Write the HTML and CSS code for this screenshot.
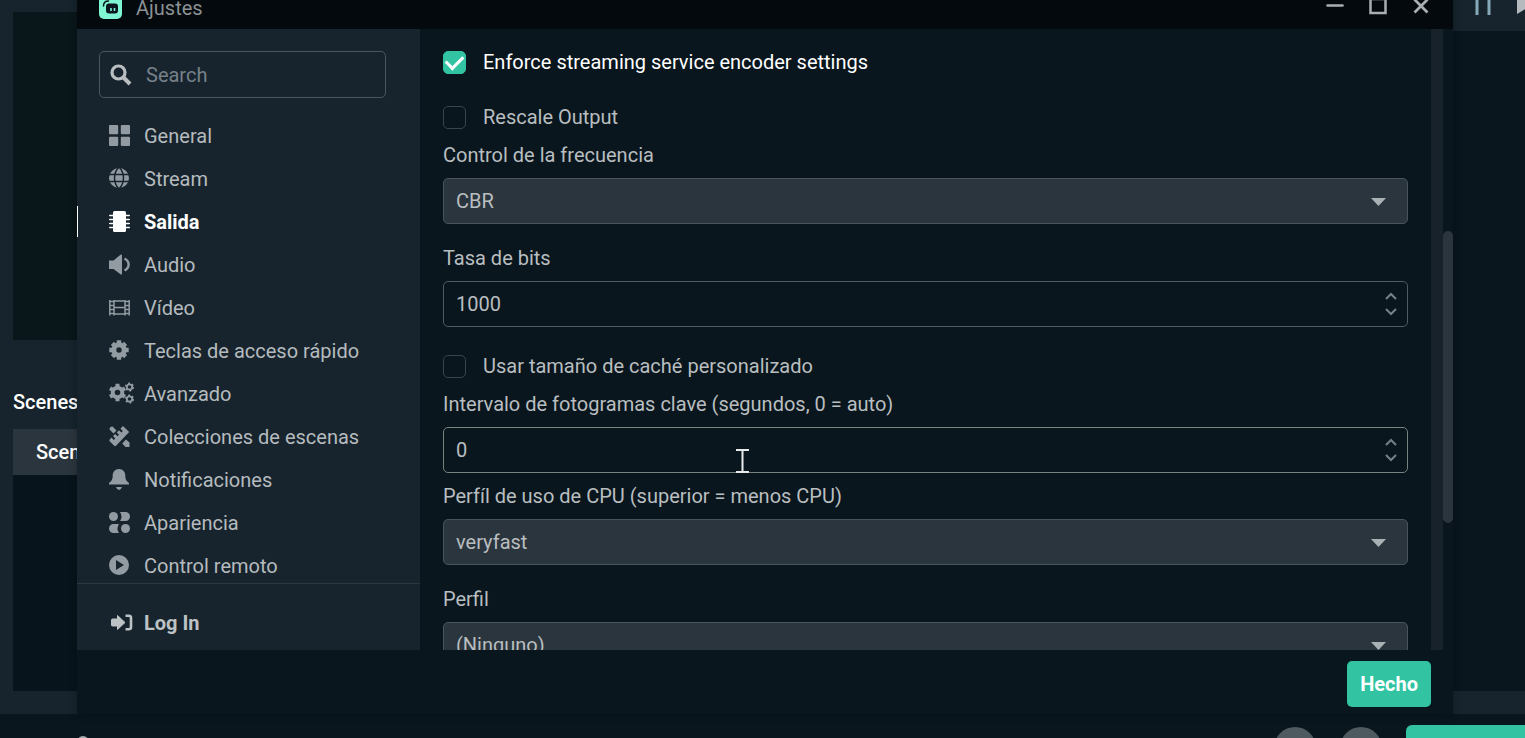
FILE: index.html
```
<!DOCTYPE html>
<html lang="es">
<head>
  <meta charset="UTF-8">
  <title>Ajustes</title>
  <link rel="stylesheet" href="styles.css">
</head>
<body>
  <div class="app">
    <div class="studio">
      <main class="studio-main">
        <div class="preview"></div>
        <h2 class="scenes-title">Scenes</h2>
        <div class="scenes-list">
          <div class="scene">Scene</div>
        </div>
      </main>
      <aside class="side-panel">
        <div class="side-header">
          <svg width="56" height="16" viewBox="0 0 56 16">
            <path d="M4 0v15M16 0v15" stroke="#86a9ba" stroke-width="3"/>
            <path d="M44 0v14l12-7V0z" fill="#b4babd"/>
          </svg>
        </div>
        <div class="side-body"></div>
      </aside>
    </div>
    <footer class="app-footer">
      <svg class="status-icon" width="12" height="12" viewBox="0 0 12 12"><circle cx="6" cy="6" r="5" fill="none" stroke="#a5adb1" stroke-width="2"/></svg>
      <button class="round-button" aria-label="Editor"></button>
      <button class="round-button" aria-label="Replay"></button>
      <button class="live-button" aria-label="Go Live"></button>
    </footer>
  </div>

  <div class="modal" role="dialog" aria-label="Ajustes">
    <header class="titlebar">
      <svg class="logo" width="23" height="23" viewBox="0 0 23 23">
        <rect width="23" height="23" rx="5" fill="#80f5d2"/>
        <path d="M4.500 10c0-3.500 1.500-5 5-5" fill="none" stroke="#09161d" stroke-width="1.500" stroke-linecap="round"/>
        <rect x="7" y="7.500" width="12" height="10" rx="3" fill="#09161d"/>
        <path d="M12 12v3M15.500 12v3" stroke="#80f5d2" stroke-width="1.600"/>
      </svg>
      <span class="titlebar-text">Ajustes</span>
      <div class="window-buttons">
        <button aria-label="Minimizar"><svg width="20" height="20" viewBox="0 0 20 20"><path d="M2.500 7.500h15" stroke-width="2.500" stroke-linecap="round"/></svg></button>
        <button aria-label="Maximizar"><svg width="20" height="20" viewBox="0 0 20 20"><path d="M2.500 1h15v14h-15z" stroke-width="2.500"/></svg></button>
        <button aria-label="Cerrar"><svg width="20" height="20" viewBox="0 0 20 20"><path d="M3.500 1.500l13 13M16.500 1.500l-13 13" stroke-width="2.800"/></svg></button>
      </div>
    </header>

    <div class="modal-body">
      <div class="sidebar">
        <label class="search">
          <svg width="22" height="22" viewBox="0 0 22 22"><circle cx="8.500" cy="8.500" r="6.500" fill="none" stroke="currentColor" stroke-width="3.200"/><path d="M13.500 13.500l6.500 6.500" stroke="currentColor" stroke-width="4"/></svg>
          <input type="text" placeholder="Search" aria-label="Search">
        </label>
        <nav class="menu">
          <a href="#" class="menu-item">
            <svg viewBox="0 0 21 21"><rect width="9.200" height="9.200" rx="1"/><rect x="11.800" width="9.200" height="9.200" rx="1"/><rect y="11.800" width="9.200" height="9.200" rx="1"/><rect x="11.800" y="11.800" width="9.200" height="9.200" rx="1"/></svg>
            General
          </a>
          <a href="#" class="menu-item">
            <svg viewBox="0 0 21 21"><circle cx="10" cy="10" r="10"/><path class="cut" d="M0 6.500h20M0 13.500h20M10-1C4 5 4 15 10 21M10-1C16 5 16 15 10 21"/></svg>
            Stream
          </a>
          <a href="#" class="menu-item active">
            <svg viewBox="0 0 21 21"><rect x="4" width="13" height="21" rx="1.500"/><path class="line" stroke-width="1.600" stroke-linecap="round" d="M.800 4.500H4M.800 8.500H4M.800 12.500H4M.800 16.500H4M17 4.500h3.200M17 8.500h3.200M17 12.500h3.200M17 16.500h3.200"/></svg>
            Salida
          </a>
          <a href="#" class="menu-item">
            <svg viewBox="0 0 21 21"><path d="M0 6.500h4.500L11.500.800q1.500-1 1.500 1v17.500q0 2-1.500 1L4.500 15H0z"/><path class="line" stroke-width="2.400" d="M15.500 4.500c5.500 3 5.500 9 0 12"/></svg>
            Audio
          </a>
          <a href="#" class="menu-item">
            <svg viewBox="0 0 21 21"><path class="line" stroke-width="1.500" d="M.800 3v15.500M20.200 3v15.500M5 3v15.500M16 3v15.500M5 4h11M5 10.500h11M5 17h11M1 4.500h4M1 8.500h4M1 12.500h4M1 16.500h4M16 4.500h4M16 8.500h4M16 12.500h4M16 16.500h4"/></svg>
            Vídeo
          </a>
          <a href="#" class="menu-item">
            <svg viewBox="0 0 21 21"><circle class="line" cx="10" cy="10" r="5.200" stroke-width="5"/><path class="line" stroke-width="4.400" d="M10 3V.300M10 17v2.700M3 10H.300M17 10h2.700M5 5L3.400 3.400M15 5l1.600-1.600M5 15l-1.600 1.600M15 15l1.600 1.600"/></svg>
            Teclas de acceso rápido
          </a>
          <a href="#" class="menu-item">
            <svg viewBox="0 0 21 21">
              <circle class="line" cx="8.500" cy="9.500" r="4.800" stroke-width="4"/>
              <path class="line" stroke-width="4" d="M8.500 3.800V.800M8.500 15.200v3M3.600 6.700L1 5.200M13.400 6.700L16 5.200M3.600 12.300L1 13.800M13.400 12.300L16 13.800"/>
              <circle class="line" cx="20.500" cy="4" r="2.700" stroke-width="1.800"/><circle class="line" cx="20.500" cy="16" r="2.700" stroke-width="1.800"/>
              <circle class="line" cx="20.500" cy="4" r="3.800" stroke-width="1.500" stroke-dasharray="2 2"/><circle class="line" cx="20.500" cy="16" r="3.800" stroke-width="1.500" stroke-dasharray="2 2"/>
            </svg>
            Avanzado
          </a>
          <a href="#" class="menu-item">
            <svg viewBox="0 0 21 21"><path d="M14.500.600l5.700 5.500L7 19.800q-.9.900-1.800 0L.700 15.300q-.9-.9 0-1.800l1.800-1.900 2.300 2.300 1.500-1.500L4 10.100l2.200-2.200 2.300 2.300L10 8.700 7.700 6.400 10 4.200l2.300 2.300L13.800 5 11.500 2.700l1.600-2q.7-.7 1.400-.1z"/><path d="M3.500.500l4 4-3 3-4-4q0-3 3-3zM17 13.500l3.500 3v4.500h-4l-3.300-3.500z"/></svg>
            Colecciones de escenas
          </a>
          <a href="#" class="menu-item">
            <svg viewBox="0 0 21 21"><path d="M10 0c4 0 6.300 3 6.300 6.500 0 4 1 5.500 3.700 7.500v1.500H0V14c2.700-2 3.700-3.500 3.700-7.500C3.700 3 6 0 10 0zM7 18h6q-1 3-3 3t-3-3z"/></svg>
            Notificaciones
          </a>
          <a href="#" class="menu-item">
            <svg viewBox="0 0 21 21"><circle cx="4.500" cy="4.500" r="4.500"/><path d="M11 0h5.500a4.500 4.500 0 0 1 0 9H11q3-4.500 0-9zM10 12H4.500a4.500 4.500 0 0 0 0 9H10q-3-4.500 0-9z"/><circle cx="16.500" cy="16.500" r="4.500"/></svg>
            Apariencia
          </a>
          <a href="#" class="menu-item">
            <svg viewBox="0 0 21 21"><path fill-rule="evenodd" d="M10 0a10 10 0 1 0 0 20 10 10 0 0 0 0-20zM7 5l8 5-8 5z"/></svg>
            Control remoto
          </a>
        </nav>
        <div class="login">
          <a href="#" class="menu-item">
            <svg viewBox="0 0 21 21"><path d="M3.500 7h5V3.500L16 10.500 8.500 17.500V14h-5q-1 0-1-1V8q0-1 1-1z" stroke="currentColor" stroke-linejoin="round"/><path class="line" stroke-width="2.600" d="M16.500 3.800h3.200q2.300 0 2.300 2v9.400q0 2-2.300 2h-3.200"/></svg>
            Log In
          </a>
        </div>
      </div>

      <form class="settings">
        <label class="check">
          <input type="checkbox" checked>
          <span>Enforce streaming service encoder settings</span>
        </label>
        <label class="check">
          <input type="checkbox">
          <span>Rescale Output</span>
        </label>
        <div class="field">
          <label for="rate-control">Control de la frecuencia</label>
          <div class="control">
            <select id="rate-control"><option>CBR</option></select>
            <svg class="caret" width="15" height="8" viewBox="0 0 15 8"><path d="M0 0h15L7.500 8z"/></svg>
          </div>
        </div>
        <div class="field">
          <label for="bitrate">Tasa de bits</label>
          <div class="control">
            <input type="number" id="bitrate" value="1000">
            <div class="spinner">
              <button type="button" aria-label="Subir"><svg width="12" height="8" viewBox="0 0 12 8"><path d="M1 7l5-5 5 5"/></svg></button>
              <button type="button" aria-label="Bajar"><svg width="12" height="8" viewBox="0 0 12 8"><path d="M1 1l5 5 5-5"/></svg></button>
            </div>
          </div>
        </div>
        <label class="check">
          <input type="checkbox">
          <span>Usar tamaño de caché personalizado</span>
        </label>
        <div class="field">
          <label for="keyint">Intervalo de fotogramas clave (segundos, 0 = auto)</label>
          <div class="control hovered">
            <input type="number" id="keyint" value="0">
            <div class="spinner">
              <button type="button" aria-label="Subir"><svg width="12" height="8" viewBox="0 0 12 8"><path d="M1 7l5-5 5 5"/></svg></button>
              <button type="button" aria-label="Bajar"><svg width="12" height="8" viewBox="0 0 12 8"><path d="M1 1l5 5 5-5"/></svg></button>
            </div>
          </div>
        </div>
        <div class="field field-tight">
          <label for="preset">Perfíl de uso de CPU (superior = menos CPU)</label>
          <div class="control">
            <select id="preset"><option>veryfast</option></select>
            <svg class="caret" width="15" height="8" viewBox="0 0 15 8"><path d="M0 0h15L7.500 8z"/></svg>
          </div>
        </div>
        <div class="field">
          <label for="profile">Perfil</label>
          <div class="control">
            <select id="profile"><option>(Ninguno)</option></select>
            <svg class="caret" width="15" height="8" viewBox="0 0 15 8"><path d="M0 0h15L7.500 8z"/></svg>
          </div>
        </div>
      </form>

      <div class="scroll-area">
        <div class="scroll-track"></div>
        <div class="scroll-thumb"></div>
      </div>
    </div>

    <div class="modal-footer">
      <button class="done-button">Hecho</button>
    </div>
  </div>

  <!-- text cursor -->
  <svg class="cursor" width="13" height="24" viewBox="0 0 13 24"><path d="M0 1h13M0 23h13M6.500 1v22" stroke="#e8eaeb" stroke-width="2"/></svg>
</body>
</html>
```
FILE: styles.css
```
* {
  box-sizing: border-box;
}

body {
  margin: 0;
  height: 100vh;
  overflow: hidden;
  position: relative;
  background-color: #09161d;
  color: #b9bec0;
  font-family: Roboto, "Liberation Sans", sans-serif;
  font-size: 20px;
  line-height: 24px;
}

button,
input,
select {
  font: inherit;
  color: inherit;
}

button {
  border: none;
  padding: 0;
  background: none;
  cursor: pointer;
}

svg {
  display: block;
  flex: none;
}

/* main window */
.app {
  display: flex;
  flex-direction: column;
  height: 100vh;
}

.studio {
  flex: 1;
  display: flex;
  min-height: 0;
  background-color: #17242d;
}

.studio-main {
  flex: 1;
  display: flex;
  flex-direction: column;
  padding: 12px 13px 23px;
}

.preview {
  flex: 328;
  background-color: #09161a;
}

.scenes-title {
  margin: 50px 0 15px;
  font-size: 20px;
  font-weight: 500;
  color: #fff;
}

.scenes-list {
  flex: 262;
  background-color: #07141b;
}

.scene {
  padding: 11px 23px;
  background-color: #2b353d;
  color: #fff;
  font-weight: 500;
}

.side-panel {
  display: flex;
  flex-direction: column;
  width: 76px;
  padding-bottom: 23px;
}

.side-header {
  height: 31px;
  padding-left: 24px;
  overflow: hidden;
}

.side-body {
  flex: 1;
  background-color: #09161d;
}

.app-footer {
  display: flex;
  gap: 24px;
  height: 24px;
  padding-left: 77px;
  overflow: hidden;
}

.status-icon {
  margin-top: 22px;
  margin-right: auto;
}

.round-button {
  flex: none;
  width: 42px;
  height: 42px;
  margin-top: 13px;
  border-radius: 50%;
  background-color: #4f5a60;
}

.live-button {
  flex: none;
  width: 119px;
  height: 46px;
  margin-top: 11px;
  border-radius: 6px 0 0 6px;
  background-color: #31c3a2;
}

/* settings window, its top edge is off screen */
.modal {
  position: absolute;
  top: -14px;
  right: 72px;
  bottom: 24px;
  left: 77px;
  display: flex;
  flex-direction: column;
  background-color: #09161d;
  box-shadow: 0 0 8px rgba(0, 0, 0, 0.3);
}

.titlebar {
  display: flex;
  align-items: center;
  height: 43px;
  padding: 0 22px;
  background-color: #03090c;
}

.titlebar-text {
  flex: 1;
  margin-left: 14px;
  color: #8b9194;
}

.window-buttons {
  display: flex;
  gap: 23px;
}

.window-buttons svg {
  fill: none;
  stroke: #a9afb2;
}

.modal-body {
  flex: 1;
  display: flex;
  min-height: 0;
}

.sidebar {
  display: flex;
  flex-direction: column;
  width: 343px;
  background-color: #17242d;
}

.search {
  display: flex;
  align-items: center;
  gap: 14px;
  height: 47px;
  margin: 22px 34px 16px 22px;
  padding: 0 10px;
  border: 1px solid #4a555c;
  border-radius: 5px;
}

.search input {
  flex: 1;
  min-width: 0;
  padding: 0;
  border: none;
  outline: none;
  background: none;
}

.search input::placeholder {
  color: #76818a;
  opacity: 1;
}

.menu {
  flex: 1;
  min-height: 0;
  overflow: hidden;
}

.menu-item {
  display: flex;
  align-items: center;
  gap: 14px;
  height: 43px;
  padding-left: 32px;
  color: #b5bbbe;
  text-decoration: none;
}

.menu-item svg {
  width: 21px;
  height: 21px;
  overflow: visible;
  fill: currentColor;
  color: #919ba1;
}

.menu-item .line {
  fill: none;
  stroke: currentColor;
}

.menu-item .cut {
  fill: none;
  stroke: #17242d;
  stroke-width: 1.5px;
}

.menu-item.active,
.menu-item.active svg {
  color: #fff;
  font-weight: 700;
}

.menu-item.active {
  background: linear-gradient(#fff, #fff) left center / 1px 31px no-repeat;
}

.login {
  padding: 17px 0 6px;
  border-top: 1px solid #2b383f;
}

.login .menu-item,
.login .menu-item svg {
  color: #bdc2c4;
  font-weight: 700;
}

.settings {
  flex: 1;
  min-width: 0;
  padding: 21px 23px 0;
  overflow: hidden;
}

.check {
  display: flex;
  align-items: center;
  gap: 17px;
}

.check + .check {
  margin-top: 31px;
}

.check + .field {
  margin-top: 14px;
}

.field + .check {
  margin-top: 27px;
}

.field + .field {
  margin-top: 22px;
}

.field + .field-tight {
  margin-top: 11px;
}

.check input {
  appearance: none;
  flex: none;
  width: 23px;
  height: 23px;
  margin: 0;
  border: 1px solid #38444b;
  border-radius: 5px;
}

.check input:checked {
  border-color: #31c3a2;
  background-color: #31c3a2;
  display: grid;
  place-items: center;
}

.check input:checked::before {
  content: "";
  width: 14px;
  height: 8px;
  margin-bottom: 4px;
  border: solid #fff;
  border-width: 0 0 3px 3px;
  transform: rotate(-45deg);
}

.check input:checked + span {
  color: #fff;
}

.field > label {
  display: block;
  margin-bottom: 11px;
}

.control {
  position: relative;
}

.control input,
.control select {
  display: block;
  appearance: none;
  width: 100%;
  height: 46px;
  margin: 0;
  padding: 0 12px;
  border: 1px solid #4f5b61;
  border-radius: 5px;
  outline: none;
  background-color: transparent;
}

.control select {
  border-color: #48545b;
  background-color: #2b353d;
}

.control.hovered input {
  border-color: #78827f;
}

.control input[type="number"] {
  appearance: textfield;
}

.control input::-webkit-inner-spin-button {
  appearance: none;
}

.caret {
  position: absolute;
  top: 20px;
  right: 22px;
  fill: #a9b1b4;
  pointer-events: none;
}

.spinner {
  position: absolute;
  top: 11px;
  right: 11px;
  display: grid;
  gap: 8px;
}

.spinner svg {
  fill: none;
  stroke: #75808a;
  stroke-width: 2px;
}

.scroll-area {
  display: flex;
  width: 22px;
}

.scroll-track {
  width: 12px;
  background-color: #17222a;
}

/* 292 of 621 visible, scrolled a third of the way down */
.scroll-thumb {
  width: 10px;
  height: 47%;
  margin-top: 202px;
  border-radius: 5px;
  background-color: #2b353d;
}

.modal-footer {
  display: flex;
  justify-content: flex-end;
  padding: 11px 22px 7px;
}

.done-button {
  height: 46px;
  padding: 0 13px;
  border-radius: 5px;
  background-color: #31c3a2;
  color: #fff;
  font-weight: 700;
}

.cursor {
  position: absolute;
  top: 449px;
  left: 736px;
  pointer-events: none;
}
```
